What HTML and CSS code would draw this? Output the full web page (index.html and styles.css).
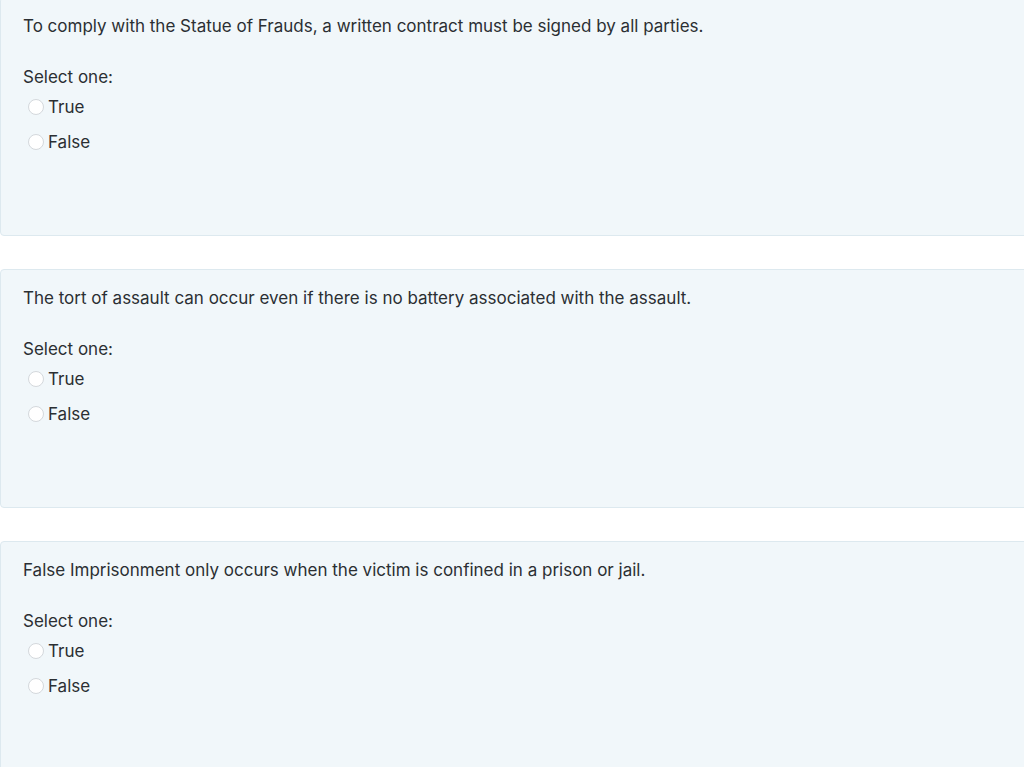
FILE: index.html
```html
<!DOCTYPE html>
<html>
<head>
<meta charset="utf-8">
<link rel="stylesheet" href="styles.css">
</head>
<body>
<div class="list">
  <div class="card">
    <div class="qtext">To comply with the Statue of Frauds, a written contract must be signed by all parties.</div>
    <div class="prompt">Select one:</div>
    <div class="answers">
      <label class="opt"><span class="radio"></span><span>True</span></label>
      <label class="opt"><span class="radio"></span><span>False</span></label>
    </div>
  </div>
  <div class="card">
    <div class="qtext">The tort of assault can occur even if there is no battery associated with the assault.</div>
    <div class="prompt">Select one:</div>
    <div class="answers">
      <label class="opt"><span class="radio"></span><span>True</span></label>
      <label class="opt"><span class="radio"></span><span>False</span></label>
    </div>
  </div>
  <div class="card">
    <div class="qtext">False Imprisonment only occurs when the victim is confined in a prison or jail.</div>
    <div class="prompt">Select one:</div>
    <div class="answers">
      <label class="opt"><span class="radio"></span><span>True</span></label>
      <label class="opt"><span class="radio"></span><span>False</span></label>
    </div>
  </div>
</div>
</body>
</html>
```
FILE: styles.css
```css
html, body {
  margin: 0;
  padding: 0;
  background: #ffffff;
  overflow: hidden;
}
body {
  font-family: Inter, "Liberation Sans", Arial, sans-serif;
  font-size: 17px;
  color: #2b2f33;
}
.list {
  display: flex;
  flex-direction: column;
  gap: 33px;
  margin-top: -3px;
  margin-right: -10px;
}
.card {
  box-sizing: border-box;
  height: 239px;
  background: #f1f7fa;
  border: 1px solid #dde9ef;
  border-radius: 4px;
  padding: 0 22px;
}
.qtext {
  margin-top: 17px;
  line-height: 22px;
}
.prompt {
  margin-top: 29px;
  line-height: 22px;
}
.answers {
  display: flex;
  flex-direction: column;
  gap: 13px;
  margin-top: 8px;
  padding-left: 5px;
}
.opt {
  display: flex;
  align-items: center;
  line-height: 22px;
}
.radio {
  box-sizing: border-box;
  width: 16px;
  height: 16px;
  border-radius: 50%;
  border: 1px solid #d4d8dc;
  background: #ffffff;
  margin-right: 4px;
}
```
